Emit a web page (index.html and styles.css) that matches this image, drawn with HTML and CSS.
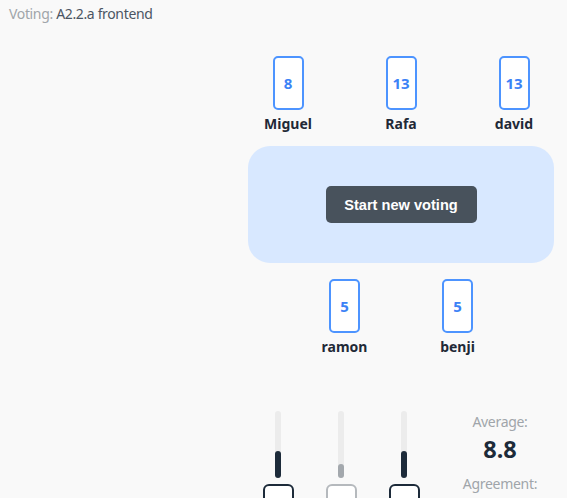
FILE: index.html
```html
<!DOCTYPE html>
<html>
<head>
<meta charset="utf-8">
<link rel="stylesheet" href="styles.css">
</head>
<body>
<div class="header"><span class="label">Voting:</span> <span class="topic">A2.2.a frontend</span></div>
<div class="board">
  <div class="row top">
    <div class="player"><div class="card">8</div><div class="name">Miguel</div></div>
    <div class="player"><div class="card">13</div><div class="name">Rafa</div></div>
    <div class="player"><div class="card">13</div><div class="name">david</div></div>
  </div>
  <div class="table">
    <button class="start">Start new voting</button>
  </div>
  <div class="row bottom">
    <div class="player"><div class="card">5</div><div class="name">ramon</div></div>
    <div class="player"><div class="card">5</div><div class="name">benji</div></div>
  </div>
  <div class="results">
    <div class="bars">
      <div class="bar-col"><div class="track"><div class="fill" style="height:27px"></div></div><div class="mini"></div></div>
      <div class="bar-col"><div class="track"><div class="fill low" style="height:14px"></div></div><div class="mini low"></div></div>
      <div class="bar-col"><div class="track"><div class="fill" style="height:27px"></div></div><div class="mini"></div></div>
    </div>
    <div class="stats">
      <div class="stat-label">Average:</div>
      <div class="stat-value">8.8</div>
      <div class="stat-label">Agreement:</div>
    </div>
  </div>
</div>
</body>
</html>
```
FILE: styles.css
```css
html, body {
  margin: 0;
  padding: 0;
}
body {
  background: #f9f9f9;
  font-family: "Noto Sans", "Open Sans", sans-serif;
  color: #1f2937;
  width: 567px;
  height: 498px;
  overflow: hidden;
}
.header {
  padding: 4px 9px 0;
  font-size: 14px;
  line-height: 20px;
  letter-spacing: -0.35px;
}
.header .label { color: #a0a5aa; }
.header .topic { color: #4b5563; }

.board {
  margin-left: 248px;
  width: 306px;
  padding-top: 32px;
}
.row {
  display: flex;
  justify-content: center;
  gap: 53px;
}
.player {
  width: 60px;
  display: flex;
  flex-direction: column;
  align-items: center;
}
.card {
  box-sizing: border-box;
  width: 31px;
  height: 54px;
  border: 2px solid #4d94ff;
  border-radius: 5px;
  background: #fff;
  color: #3b82f6;
  font-weight: 700;
  font-size: 15px;
  display: flex;
  align-items: center;
  justify-content: center;
}
.name {
  margin-top: 4px;
  font-weight: 700;
  font-size: 14px;
  line-height: 20px;
  color: #1f2937;
}
.table {
  margin-top: 12px;
  height: 117px;
  border-radius: 22px;
  background: #d8e8ff;
  display: flex;
  align-items: center;
  justify-content: center;
}
.start {
  width: 151px;
  height: 37px;
  border: none;
  border-radius: 5px;
  background: #48525c;
  color: #fff;
  font-family: "Liberation Sans", Arial, sans-serif;
  font-weight: 700;
  font-size: 14.6px;
  padding: 0;
}
.bottom {
  margin-top: 16px;
}
.results {
  margin-top: 54px;
  display: flex;
  margin-left: 15px;
}
.bars {
  display: flex;
  gap: 33px;
}
.bar-col {
  width: 30px;
  display: flex;
  flex-direction: column;
  align-items: center;
}
.track {
  width: 6px;
  height: 67px;
  border-radius: 3px;
  background: #ececec;
  display: flex;
  flex-direction: column;
  justify-content: flex-end;
}
.fill {
  border-radius: 3px;
  background: #1d2b3a;
}
.fill.low { background: #a3a8ad; }
.mini {
  margin-top: 6px;
  box-sizing: border-box;
  width: 31px;
  height: 50px;
  border: 2px solid #1d2b3a;
  border-radius: 6px;
  background: #fff;
}
.mini.low { border-color: #b5b9bd; }
.stats {
  margin-left: 31px;
  width: 100px;
  display: flex;
  flex-direction: column;
  align-items: center;
}
.stat-label {
  font-size: 14px;
  line-height: 20px;
  letter-spacing: -0.3px;
  color: #a0a5aa;
  margin-top: 1px;
}
.stat-value {
  font-size: 23.5px;
  font-weight: 700;
  line-height: 30px;
  color: #1d2b3a;
  margin: 2px 0 9px;
}
```
